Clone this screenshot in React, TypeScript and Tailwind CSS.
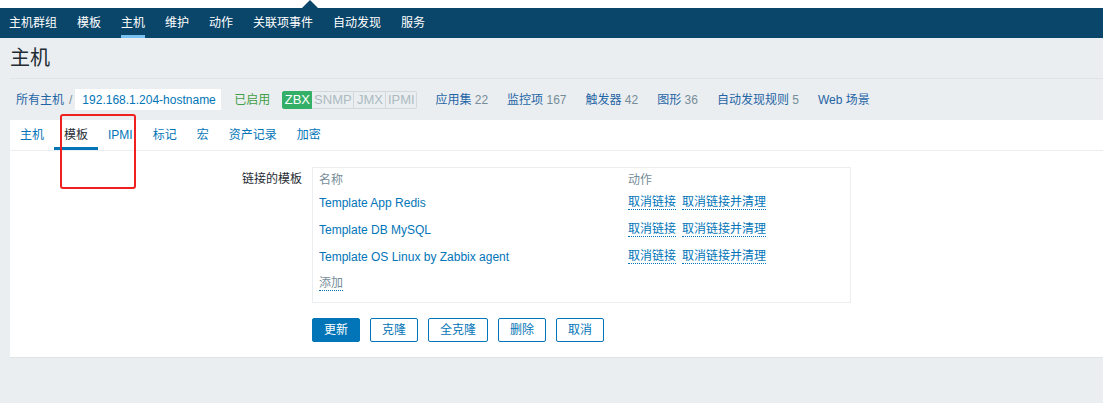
import React from 'react';

const navItems = ['主机群组', '模板', '主机', '维护', '动作', '关联项事件', '自动发现', '服务'];
const tabs = ['主机', '模板', 'IPMI', '标记', '宏', '资产记录', '加密'];
const counts: [string, string][] = [
  ['应用集', '22'],
  ['监控项', '167'],
  ['触发器', '42'],
  ['图形', '36'],
  ['自动发现规则', '5'],
  ['Web 场景', ''],
];
const linked = ['Template App Redis', 'Template DB MySQL', 'Template OS Linux by Zabbix agent'];

export default function App(): JSX.Element {
  return (
    <div className="relative w-[1103px] h-[403px] overflow-hidden bg-[#ebeef0] text-[12px] text-[#1f2c33] font-['Liberation_Sans','Noto_Sans_CJK_SC',sans-serif]">
      {/* top strip + menu */}
      <div className="h-[8px] bg-white" />
      <div className="absolute left-[302px] top-0 w-0 h-0 border-l-[8px] border-r-[8px] border-b-[8px] border-l-transparent border-r-transparent border-b-[#0a466a]" />
      <div className="h-[30px] bg-[#0a466a] flex">
        {navItems.map((item, i) => (
          <div
            key={item}
            className={`relative h-full flex items-center text-white ${i === 0 ? 'pl-[9px] pr-[10px]' : 'px-[10px]'}`}
          >
            {item}
            {item === '主机' && i === 2 && (
              <span className="absolute left-[10px] right-[10px] bottom-0 h-[3px] bg-[#79c1f0]" />
            )}
          </div>
        ))}
      </div>

      {/* page title */}
      <div className="ml-[10px] h-[41px] flex items-center border-b border-[#dfe4e7] text-[20px] leading-none">
        主机
      </div>

      {/* breadcrumb row */}
      <div className="h-[41px] flex items-center pl-[16px]">
        <span className="text-[#1f65a6]">所有主机</span>
        <span className="ml-[5px] mr-[3px] text-[#768d99]">/</span>
        <div className="h-[21px] w-[146px] bg-white flex items-center pl-[7px] text-[#0275b8]">
          192.168.1.204-hostname
        </div>
        <span className="ml-[13px] text-[#429e47]">已启用</span>
        <div className="ml-[12px] flex h-[18px] leading-[16px] text-[13px]">
          <span className="block w-[30px] bg-[#34af67] border border-[#34af67] text-white text-center rounded-l-[2px]">ZBX</span>
          <span className="block w-[42px] bg-[#ebeef0] border border-[#d2d9dd] border-l-0 text-[#acbbc2] text-center">SNMP</span>
          <span className="block w-[32px] bg-[#ebeef0] border border-[#d2d9dd] border-l-0 text-[#acbbc2] text-center">JMX</span>
          <span className="block w-[31px] bg-[#ebeef0] border border-[#d2d9dd] border-l-0 text-[#acbbc2] text-center rounded-r-[2px]">IPMI</span>
        </div>
        <div className="ml-[18px] flex gap-[19px]">
          {counts.map(([label, n]) => (
            <span key={label}>
              <span className="text-[#1f65a6]">{label}</span>
              {n && <span className="text-[#768d99]"> {n}</span>}
            </span>
          ))}
        </div>
      </div>

      {/* main panel */}
      <div className="ml-[10px] bg-white border-b border-[#dfe4e7]">
        <div className="h-[31px] flex border-b border-[#ebeef0]">
          {tabs.map((tab) => (
            <div
              key={tab}
              className={`relative h-full px-[10px] flex items-center ${tab === '模板' ? 'text-[#1f2c33]' : 'text-[#0275b8]'}`}
            >
              {tab}
              {tab === '模板' && <span className="absolute left-0 right-0 bottom-0 h-[3px] bg-[#0275b8]" />}
            </div>
          ))}
        </div>

        <div className="pt-[16px] pb-[15px]">
          <div className="flex">
            <div className="w-[292px] text-right pt-[3px] leading-[18px]">链接的模板</div>
            <div className="ml-[10px] w-[539px] border border-[#ebeef0] pl-[6px] pt-[3px] pb-[5px]">
              <div className="h-[18px] flex items-center text-[#768d99]">
                <span className="w-[309px]">名称</span>
                <span>动作</span>
              </div>
              {linked.map((name) => (
                <div key={name} className="h-[27px] flex items-center">
                  <span className="w-[309px] text-[#0275b8]">{name}</span>
                  <span className="text-[#0275b8] border-b border-dotted border-[#0275b8] leading-[14px]">取消链接</span>
                  <span className="ml-[6px] text-[#0275b8] border-b border-dotted border-[#0275b8] leading-[14px]">取消链接并清理</span>
                </div>
              ))}
              <div className="h-[27px] flex items-center">
                <span className="text-[#768d99] border-b border-dotted border-[#0275b8] leading-[14px]">添加</span>
              </div>
            </div>
          </div>

          <div className="ml-[302px] mt-[15px] flex gap-[10px]">
            <button className="h-[24px] w-[48px] rounded-[2px] bg-[#0275b8] border border-[#0275b8] text-white">更新</button>
            <button className="h-[24px] w-[48px] rounded-[2px] bg-white border border-[#0275b8] text-[#0275b8]">克隆</button>
            <button className="h-[24px] w-[60px] rounded-[2px] bg-white border border-[#0275b8] text-[#0275b8]">全克隆</button>
            <button className="h-[24px] w-[48px] rounded-[2px] bg-white border border-[#0275b8] text-[#0275b8]">删除</button>
            <button className="h-[24px] w-[48px] rounded-[2px] bg-white border border-[#0275b8] text-[#0275b8]">取消</button>
          </div>
        </div>
      </div>

      {/* red annotation box */}
      <div className="absolute left-[60px] top-[114px] w-[76px] h-[75px] border-2 border-[#f02020] rounded-[3px]" />
    </div>
  );
}
